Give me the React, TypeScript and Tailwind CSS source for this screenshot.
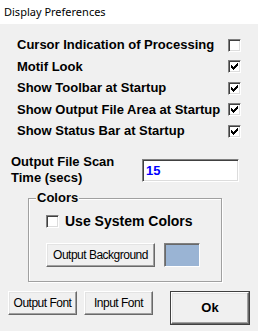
const raised =
  "bg-[#f0f0f0] border border-t-white border-l-white border-r-[#696969] border-b-[#696969] shadow-[inset_-1px_-1px_0_#a0a0a0,inset_1px_1px_0_#e3e3e3]";
const sunken =
  "bg-white border border-t-[#808080] border-l-[#808080] border-r-white border-b-white shadow-[inset_1px_1px_0_#404040,inset_-1px_-1px_0_#dcdcdc]";

const CheckBox = ({ checked }: { checked: boolean }) => (
  <div className={`w-[13px] h-[13px] shrink-0 relative ${sunken}`}>
    {checked && (
      <svg
        className="absolute left-[2px] top-[2px]"
        width="7"
        height="7"
        viewBox="0 0 7 7"
        shapeRendering="crispEdges"
      >
        <path
          d="M6 0h1v3h-1zM5 1h1v3h-1zM4 2h1v3h-1zM0 2h1v3h-1zM1 3h1v3h-1zM2 4h1v3h-1zM3 3h1v3h-1z"
          fill="#000"
        />
      </svg>
    )}
  </div>
);

const Button = ({
  label,
  className,
}: {
  label: string;
  className: string;
}) => (
  <button
    className={`flex items-center justify-center text-[12px] tracking-[-0.5px] ${raised} ${className}`}
  >
    {label}
  </button>
);

const options = [
  { label: "Cursor Indication of Processing", checked: false },
  { label: "Motif Look", checked: true },
  { label: "Show Toolbar at Startup", checked: true },
  { label: "Show Output File Area at Startup", checked: true },
  { label: "Show Status Bar at Startup", checked: true },
];

export default function App() {
  return (
    <div className="w-[258px] h-[331px] bg-[#f0f0f0] text-black font-['Liberation_Sans',Arial,sans-serif] overflow-hidden">
      <div className="h-[24px] bg-white flex items-center pl-[4px] text-[11px] font-['Noto_Sans',sans-serif]">
        Display Preferences
      </div>

      <div className="pt-[10px] pl-[17px] w-[241px]">
        {options.map((o, i) => (
          <div
            key={o.label}
            className={`${i % 2 ? "h-[21px]" : "h-[22px]"} flex items-center justify-between text-[13px] font-bold`}
          >
            <span>{o.label}</span>
            <CheckBox checked={o.checked} />
          </div>
        ))}
      </div>

      <div className="mt-[12px] pl-[11px] flex items-start">
        <div className="w-[131px] text-[13px] font-bold leading-[16px]">
          Output File Scan
          <br />
          Time (secs)
        </div>
        <div
          className={`mt-[5px] w-[97px] h-[23px] flex items-center pl-[3px] text-[13px] font-bold text-[#0000ff] ${sunken}`}
        >
          15
        </div>
      </div>

      <fieldset className="mt-[4px] ml-[28px] w-[194px] h-[92px] border border-[#a0a0a0] shadow-[1px_1px_0_#fff,inset_1px_1px_0_#fff] pl-[17px]">
        <legend className="ml-[-10px] px-[1px] bg-[#f0f0f0] text-[13px] font-bold leading-[16px]">
          Colors
        </legend>
        <div className="mt-[5px] h-[20px] flex items-center gap-[6px] text-[14px] font-bold">
          <CheckBox checked={false} />
          <span>Use System Colors</span>
        </div>
        <div className="mt-[12px] flex items-center">
          <Button label="Output Background" className="w-[109px] h-[24px]" />
          <div className="ml-[9px] w-[36px] h-[24px] bg-[#9ab4d4] border border-t-[#808080] border-l-[#808080] border-r-white border-b-white shadow-[inset_1px_1px_0_#696969]" />
        </div>
      </fieldset>

      <div className="mt-[9px] pl-[8px] flex items-start">
        <Button label="Output Font" className="w-[69px] h-[24px]" />
        <Button label="Input Font" className="ml-[7px] w-[69px] h-[24px]" />
        <div className="ml-[17px] w-[80px] h-[34px] border border-[#404040]">
          <button
            className={`w-full h-full flex items-center justify-center text-[13px] font-bold ${raised}`}
          >
            Ok
          </button>
        </div>
      </div>
    </div>
  );
}
